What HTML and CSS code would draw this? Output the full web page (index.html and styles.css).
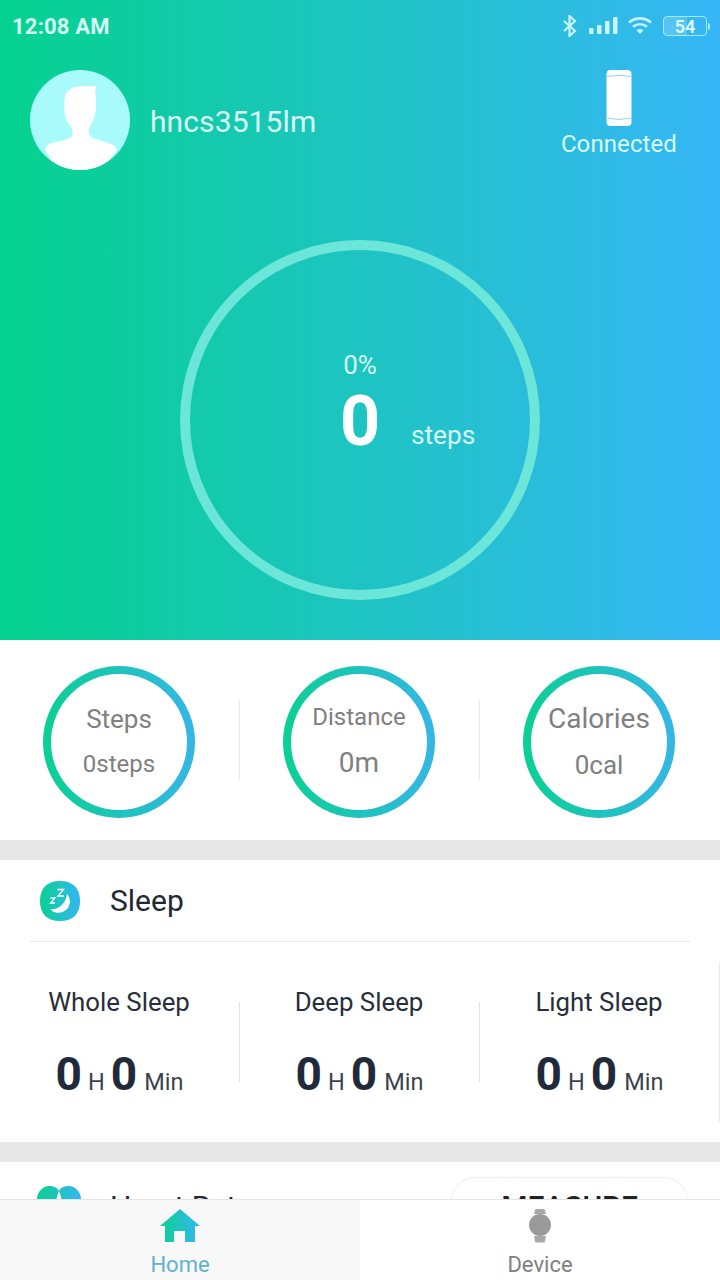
FILE: index.html
```html
<!DOCTYPE html>
<html lang="en">
<head>
<meta charset="utf-8">
<title>Home</title>
<link rel="stylesheet" href="styles.css">
</head>
<body>
<svg class="defs" width="0" height="0" aria-hidden="true">
  <defs>
    <linearGradient id="brand" x1="0" y1="0" x2="1" y2="0">
      <stop offset="0" stop-color="#0ad092"/>
      <stop offset="1" stop-color="#35b6f3"/>
    </linearGradient>
  </defs>
</svg>
<div class="app">
  <main class="content">
    <section class="hero">
      <div class="status">
        <span class="clock">12:08 AM</span>
        <div class="status-icons">
          <svg class="ic-bt" width="16" height="22" viewBox="0 0 16 22"><path d="M2 6l11 10-5.500 5V1L13 6 2 16" fill="none" stroke="#c8f6f6" stroke-width="2.200"/></svg>
          <svg class="ic-sig" width="30" height="20" viewBox="0 0 30 20"><g fill="#c8f6f6"><rect x="1" y="12" width="4.500" height="6" rx="1"/><rect x="9" y="9" width="4.500" height="9" rx="1"/><rect x="17" y="5" width="4.500" height="13" rx="1"/><rect x="25" y="1" width="4.500" height="17" rx="1"/></g></svg>
          <svg class="ic-wifi" width="26" height="20" viewBox="0 0 26 20"><g fill="none" stroke="#c8f6f6" stroke-width="2.600"><path d="M2 6.500C8.500 1 17.500 1 24 6.500"/><path d="M6 10.800c4.300-3.500 9.700-3.500 14 0"/></g><path d="M9.500 14.200c2.200-1.600 4.800-1.600 7 0L13 18z" fill="#c8f6f6"/></svg>
          <div class="battery">
            <div class="battery-body"><span class="battery-fill"></span><span class="battery-num">54</span></div>
            <span class="battery-tip"></span>
          </div>
        </div>
      </div>
      <div class="profile">
        <div class="user">
          <svg class="avatar" width="100" height="100" viewBox="0 0 100 100">
            <circle cx="50" cy="50" r="50" fill="#a9fbfb"/>
            <path d="M15 79c1-3 3-5 7-6 7-2 14-3 19-6 2-2 2-5 1-8-3-4-6-9-7-14-1-6-1-13 0-19 1-3 3-6 7-8 6-2 15-2 25-2-1 2-2 3-2 5 1 6 2 14 0 23-1 6-4 10-6 14-1 4 0 7 2 9 5 3 13 4 20 7 3 1 5 3 6 6L78.600 91A50 50 0 0 1 21.400 91z" fill="#fff"/>
          </svg>
          <span class="username">hncs3515lm</span>
        </div>
        <div class="device-state">
          <svg class="band" width="26" height="56" viewBox="0 0 26 56">
            <rect x=".5" width="25" height="56" rx="4" fill="#fff"/>
            <path d="M1 6.500Q13 4 25 6.500M1 48Q13 51 25 48" fill="none" stroke="#8fd6ee" stroke-width="1"/>
          </svg>
          <span class="connected">Connected</span>
        </div>
      </div>
      <div class="goal-ring">
        <span class="goal-pct">0%</span>
        <div class="goal-line"><span class="goal-num">0</span><span class="goal-unit">steps</span></div>
      </div>
    </section>

    <section class="stats">
      <div class="stat"><div class="stat-ring"><div class="stat-inner"><span class="stat-a">Steps</span><span class="stat-b">0steps</span></div></div></div>
      <div class="stat stat-div"><div class="stat-ring"><div class="stat-inner"><span class="stat-a stat-a-sm">Distance</span><span class="stat-b stat-b-lg">0m</span></div></div></div>
      <div class="stat stat-div"><div class="stat-ring"><div class="stat-inner"><span class="stat-a stat-a-lg">Calories</span><span class="stat-b stat-b-cal">0cal</span></div></div></div>
    </section>

    <section class="card sleep">
      <header class="card-head">
        <svg class="sleep-icon" width="40" height="40" viewBox="0 0 40 40">
          <path d="M20 0C33 0 40 7 40 20S33 40 20 40 0 33 0 20 7 0 20 0z" fill="url(#brand)"/>
          <path d="M27 13a11 11 0 1 1-17 15c7.500 1.500 16-5 17-15z" fill="#fff"/>
          <path d="M17.500 8.500h6l-5.500 6.500h6M10.500 17h4.500L10.500 22h4.500" fill="none" stroke="#fff" stroke-width="1.300"/>
        </svg>
        <span class="card-title">Sleep</span>
      </header>
      <div class="sleep-cols">
        <div class="sleep-col"><span class="sleep-label">Whole Sleep</span><span class="sleep-val"><b>0</b><i>H</i><b>0</b><i>Min</i></span></div>
        <div class="sleep-col sleep-div"><span class="sleep-label">Deep Sleep</span><span class="sleep-val"><b>0</b><i>H</i><b>0</b><i>Min</i></span></div>
        <div class="sleep-col sleep-div"><span class="sleep-label">Light Sleep</span><span class="sleep-val"><b>0</b><i>H</i><b>0</b><i>Min</i></span></div>
      </div>
    </section>

    <section class="card heart">
      <div class="heart-left">
        <svg class="heart-icon" width="46" height="40" viewBox="0 0 46 40">
          <path d="M23 40C8 30 1 22 1 13 1 6 7 0 13 0c4 0 8 1 10 5 2-4 6-5 10-5 6 0 12 6 12 13 0 9-7 17-22 27z" fill="url(#brand)"/>
          <path d="M23 5c-1 3-2.500 6-2.500 9h5c0-3-1.500-6-2.500-9z" fill="#fff"/>
        </svg>
        <span class="card-title">Heart Rate</span>
      </div>
      <button class="measure">MEASURE</button>
    </section>
  </main>

  <nav class="tabs">
    <div class="tab tab-on">
      <svg width="40" height="34" viewBox="0 0 40 34"><path d="M20 0L40 17h-5v16H25V22H14v11H5V17H0z" fill="url(#brand)"/></svg>
      <span>Home</span>
    </div>
    <div class="tab">
      <svg width="24" height="34" viewBox="0 0 24 34"><path d="M6 5l1-4q.2-1 1-1h8q.8 0 1 1l1 4zM6 27h12l-1 5.500q-.2 1-1 1H8q-.8 0-1-1z" fill="#a8a8a8"/><circle cx="12" cy="16" r="11" fill="#9a9a9a"/></svg>
      <span>Device</span>
    </div>
  </nav>
</div>
</body>
</html>
```

FILE: styles.css
```css
* { box-sizing: border-box; }
html, body { margin: 0; padding: 0; }
body { font-family: Roboto, "Noto Sans", sans-serif; background: #fff; }
.defs { position: absolute; }
.app { width: 720px; height: 1280px; display: flex; flex-direction: column; overflow: hidden; }
.content { height: 1199px; flex: none; overflow: hidden; background: #e7e7e7; }

.hero { height: 640px; background: linear-gradient(90deg, #05d28e 0%, #36b6f6 100%); display: flex; flex-direction: column; }
.status { height: 52px; flex: none; padding: 0 10px 0 12px; display: flex; align-items: center; justify-content: space-between; }
.clock { color: #d6fbf4; font-size: 22px; font-weight: 700; letter-spacing: .2px; }
.status-icons { display: flex; align-items: center; }
.ic-bt { margin-right: 10px; }
.ic-sig { margin-right: 9px; }
.ic-wifi { margin-right: 10px; }
.battery { display: flex; align-items: center; }
.battery-body { width: 44px; height: 20px; border: 1.500px solid #a8e9f6; border-radius: 4px; position: relative; display: flex; align-items: center; justify-content: center; overflow: hidden; }
.battery-fill { position: absolute; left: 0; top: 0; bottom: 0; width: 54%; background: rgba(255,255,255,.18); }
.battery-num { position: relative; color: #d8f8fb; font-size: 18px; font-weight: 700; }
.battery-tip { width: 2px; height: 7px; background: #a8e9f6; margin-left: 1px; border-radius: 0 2px 2px 0; }

.profile { height: 104px; margin-top: 18px; padding: 0 43px 0 30px; display: flex; justify-content: space-between; align-items: flex-start; flex: none; }
.user { display: flex; align-items: center; }
.avatar { display: block; }
.username { margin-left: 20px; color: #d8fbf6; font-size: 30px; letter-spacing: .1px; padding-top: 2px; }
.device-state { display: flex; flex-direction: column; align-items: center; }
.band { display: block; }
.connected { color: #d8fbfb; font-size: 24px; margin-top: 3px; line-height: 30px; letter-spacing: .1px; }

.goal-ring { width: 360px; height: 360px; margin: 66px auto 0; border: 10px solid #6be6d8; border-radius: 50%; display: flex; flex-direction: column; align-items: center; flex: none; color: #fff; }
.goal-pct { margin-top: 100px; font-size: 26px; line-height: 30px; color: #d8fbf4; }
.goal-line { position: relative; margin-top: -1px; }
.goal-num { font-size: 70px; font-weight: 700; line-height: 84px; display: block; }
.goal-unit { position: absolute; left: 71px; bottom: 13px; font-size: 26.300px; color: #d8fbf8; }

.stats { height: 200px; padding-top: 4px; background: #fff; display: grid; grid-template-columns: 240px 240px 240px; align-items: center; margin-bottom: 20px; }
.stat { display: flex; justify-content: center; position: relative; height: 152px; align-items: center; }
.stat-div::before { content: ""; position: absolute; left: -1px; top: 34px; width: 1px; height: 80px; background: #e9e9e9; }
.stat-ring { width: 152px; height: 152px; border-radius: 50%; padding: 8px; background: linear-gradient(90deg, #0ad092, #35b6e6); margin-left: -2px; }
.stat-inner { width: 100%; height: 100%; border-radius: 50%; background: #fff; display: flex; flex-direction: column; align-items: center; color: #808080; }
.stat-a { font-size: 26px; line-height: 30px; margin-top: 30px; }
.stat-a-sm { font-size: 24px; margin-top: 28px; }
.stat-a-lg { font-size: 28px; }
.stat-b { font-size: 24px; line-height: 30px; margin-top: 15px; }
.stat-b-lg { font-size: 28px; margin-top: 16px; }
.stat-b-cal { font-size: 26px; margin-top: 16px; }

.card { background: #fff; }
.sleep { height: 282px; margin-bottom: 20px; padding: 0 30px; position: relative; }
.sleep::after { content: ""; position: absolute; right: 0; top: 102px; width: 1px; height: 160px; background: #e9e9e9; }
.card-head { height: 82px; display: flex; align-items: center; padding-left: 10px; border-bottom: 1px solid #e8e8e8; }
.card-title { font-size: 30px; color: #1f2933; margin-left: 30px; }
.sleep-cols { display: grid; margin: 0 -30px; width: 720px; grid-template-columns: 240px 240px 240px; }
.sleep-col { height: 200px; display: flex; flex-direction: column; align-items: center; position: relative; padding: 45px 2px 0 0; }
.sleep-div::before { content: ""; position: absolute; left: -1px; top: 60px; width: 1px; height: 80px; background: #e4e4e4; }
.sleep-label { font-size: 25.800px; line-height: 30px; color: #27303a; }
.sleep-val { display: flex; align-items: baseline; margin: 30px 0 0 1px; color: #1f2b3a; }
.sleep-val b { font-size: 46px; font-weight: 700; line-height: 54px; }
.sleep-val i { font-style: normal; font-size: 23.500px; margin: 0 6px; color: #3a4450; }
.sleep-val i:last-child { margin-right: 0; margin-left: 7px; }

.heart { height: 120px; padding: 15px 32px 0 36px; display: flex; justify-content: space-between; align-items: flex-start; }
.heart-left { display: flex; align-items: center; padding-top: 9px; }
.heart-icon { display: block; }
.heart-left .card-title { margin-left: 28px; }
.measure { width: 237px; height: 58px; background: #fff; border: 1px solid #eee; border-radius: 24px; font: 500 30px Roboto, sans-serif; color: #222; padding: 0; }

.tabs { height: 81px; flex: none; display: grid; grid-template-columns: 1fr 1fr; border-top: 1px solid #e4e4e4; background: #fff; }
.tab { display: flex; flex-direction: column; align-items: center; padding-top: 9px; font-size: 22px; color: #808080; }
.tab span { line-height: 26px; margin-top: 9px; }
.tab svg { display: block; }
.tab-on { background: #f8f8f8; color: #5fb3d0; }
```
